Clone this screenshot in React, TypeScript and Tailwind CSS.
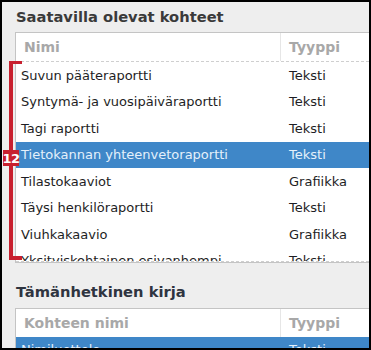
const rows = [
  { name: "Suvun pääteraportti", type: "Teksti" },
  { name: "Syntymä- ja vuosipäiväraportti", type: "Teksti" },
  { name: "Tagi raportti", type: "Teksti" },
  { name: "Tietokannan yhteenvetoraportti", type: "Teksti", selected: true },
  { name: "Tilastokaaviot", type: "Grafiikka" },
  { name: "Täysi henkilöraportti", type: "Teksti" },
  { name: "Viuhkakaavio", type: "Grafiikka" },
  { name: "Yksityiskohtainen esivanhempi", type: "Teksti" },
];

function Header({ first }: { first: string }) {
  return (
    <div className="flex h-[28px] items-center text-[14px] font-bold text-[#a8a8a8]">
      <div className="w-[264px] pl-[8px]">{first}</div>
      <div className="h-full w-px bg-[#e6e6e6]" />
      <div className="pl-[8px]">Tyyppi</div>
    </div>
  );
}

export default function App() {
  return (
    <div
      className="relative h-[350px] w-[371px] overflow-hidden border-2 border-black bg-[#eeeeee]"
      style={{ fontFamily: '"DejaVu Sans", Verdana, sans-serif' }}
    >
      <div className="flex h-[30px] items-center pl-[14px] text-[14.7px] font-bold text-[#3a3a3a]">
        Saatavilla olevat kohteet
      </div>
      <div className="ml-[13px] w-[380px] border border-[#c4c4c4] bg-white">
        <Header first="Nimi" />
        <div className="h-[201px] overflow-hidden border-y border-dashed border-[#cfcfcf]">
          {rows.map((r) => (
            <div
              key={r.name}
              className={
                "flex h-[26.5px] items-center text-[13px] " +
                (r.selected ? "bg-[#3f87c8] text-[#e4f0fb]" : "text-[#1e1e24]")
              }
            >
              <div className="w-[265px] pl-[5px]">{r.name}</div>
              <div className="pl-[8px]">{r.type}</div>
            </div>
          ))}
        </div>
      </div>
      <div className="flex h-[45px] items-center pl-[14px] pt-[14px] text-[14.7px] font-bold text-[#2e3440]">
        Tämänhetkinen kirja
      </div>
      <div className="ml-[13px] w-[380px] border border-[#c4c4c4] bg-white">
        <Header first="Kohteen nimi" />
        <div className="flex h-[26px] items-center bg-[#3f87c8] text-[13px] text-[#e4f0fb]">
          <div className="w-[265px] pl-[5px]">Nimiluettelo</div>
          <div className="pl-[8px]">Teksti</div>
        </div>
      </div>

      {/* annotation bracket */}
      <div className="absolute left-[7px] top-[59px] h-[3px] w-[13px] bg-[#c8202f]" />
      <div className="absolute left-[7px] top-[59px] h-[199px] w-[4px] bg-[#c8202f]" />
      <div className="absolute left-[7px] top-[254px] h-[4px] w-[13px] bg-[#c8202f]" />
      <div className="absolute left-[1px] top-[148px] flex h-[16px] w-[16px] items-center justify-center bg-[#c8202f] text-[13px] font-bold leading-none tracking-[-0.5px] text-white">
        12
      </div>
    </div>
  );
}
